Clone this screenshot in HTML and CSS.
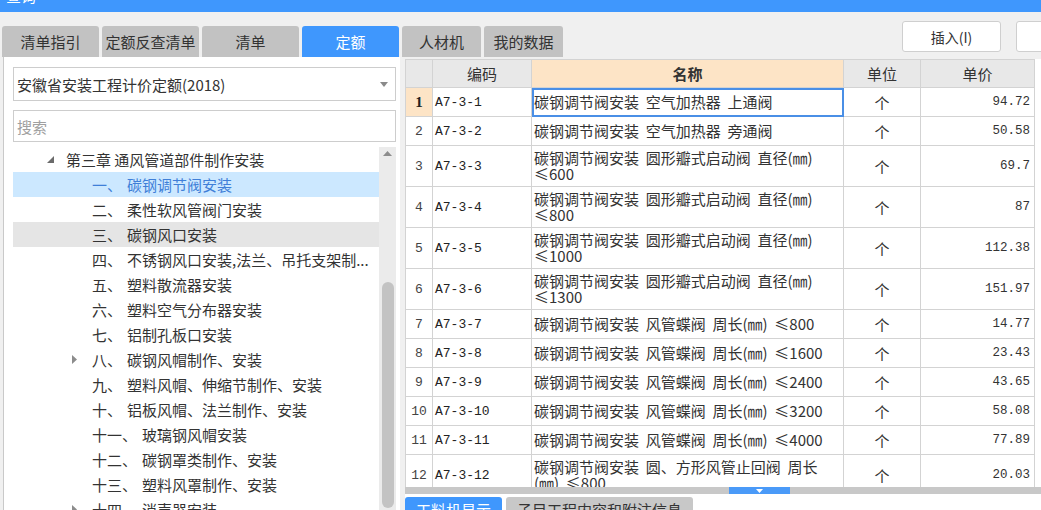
FILE: index.html
```html
<!DOCTYPE html>
<html lang="zh-CN">
<head>
<meta charset="utf-8">
<title>定额查询</title>
<link rel="stylesheet" href="styles.css">
</head>
<body>
<div class="titlebar"><div class="title">查询</div></div>
<div class="topbar">
  <div class="tabs">
    <div class="tab">清单指引</div>
    <div class="tab">定额反查清单</div>
    <div class="tab">清单</div>
    <div class="tab active">定额</div>
    <div class="tab narrow">人材机</div>
    <div class="tab narrow">我的数据</div>
  </div>
  <div class="tools">
    <div class="btn">插入(I)</div>
    <div class="btn">替换(R)</div>
  </div>
</div>
<div class="main">
  <div class="left">
    <div class="select">
      <span>安徽省安装工程计价定额(2018)</span>
      <svg class="caret" width="8" height="5" viewBox="0 0 8 5"><path d="M0 0H8L4 5Z" fill="#8a8a8a"/></svg>
    </div>
    <div class="search">搜索</div>
    <div class="tree">
      <div class="tree-list">
        <div class="node chapter"><span class="tg"><svg width="7" height="7" viewBox="0 0 7 7"><path d="M7 0V7H0Z" fill="#6b6b6b"/></svg></span>第三章 通风管道部件制作安装</div>
        <div class="node sub selected"><span class="tg"></span><span class="num">一、</span>碳钢调节阀安装</div>
        <div class="node sub"><span class="tg"></span><span class="num">二、</span>柔性软风管阀门安装</div>
        <div class="node sub hover"><span class="tg"></span><span class="num">三、</span>碳钢风口安装</div>
        <div class="node sub"><span class="tg"></span><span class="num">四、</span>不锈钢风口安装,法兰、吊托支架制...</div>
        <div class="node sub"><span class="tg"></span><span class="num">五、</span>塑料散流器安装</div>
        <div class="node sub"><span class="tg"></span><span class="num">六、</span>塑料空气分布器安装</div>
        <div class="node sub"><span class="tg"></span><span class="num">七、</span>铝制孔板口安装</div>
        <div class="node sub"><span class="tg"><svg width="5" height="9" viewBox="0 0 5 9"><path d="M0 0L5 4.5L0 9Z" fill="#8c8c8c"/></svg></span><span class="num">八、</span>碳钢风帽制作、安装</div>
        <div class="node sub"><span class="tg"></span><span class="num">九、</span>塑料风帽、伸缩节制作、安装</div>
        <div class="node sub"><span class="tg"></span><span class="num">十、</span>铝板风帽、法兰制作、安装</div>
        <div class="node sub"><span class="tg"></span><span class="num">十一、</span>玻璃钢风帽安装</div>
        <div class="node sub"><span class="tg"></span><span class="num">十二、</span>碳钢罩类制作、安装</div>
        <div class="node sub"><span class="tg"></span><span class="num">十三、</span>塑料风罩制作、安装</div>
        <div class="node sub"><span class="tg"><svg width="5" height="9" viewBox="0 0 5 9"><path d="M0 0L5 4.5L0 9Z" fill="#8c8c8c"/></svg></span><span class="num">十四、</span>消声器安装</div>
      </div>
      <div class="vscroll">
        <svg class="up" width="9" height="5" viewBox="0 0 9 5"><path d="M0 5L4.5 0L9 5Z" fill="#8c8c8c"/></svg>
        <div class="vthumb"></div>
      </div>
    </div>
  </div>
  <div class="right">
    <div class="grid-wrap">
      <table class="grid">
        <colgroup><col class="c0"><col class="c1"><col class="c2"><col class="c3"><col class="c4"></colgroup>
        <thead>
          <tr><th></th><th>编码</th><th class="hname">名称</th><th>单位</th><th>单价</th></tr>
        </thead>
        <tbody>
          <tr class="s cur"><td class="no">1</td><td class="code">A7-3-1</td><td class="name sel">碳钢调节阀安装  空气加热器  上通阀</td><td class="unit">个</td><td class="price">94.72</td></tr>
          <tr class="s"><td class="no">2</td><td class="code">A7-3-2</td><td class="name">碳钢调节阀安装  空气加热器  旁通阀</td><td class="unit">个</td><td class="price">50.58</td></tr>
          <tr class="d"><td class="no">3</td><td class="code">A7-3-3</td><td class="name">碳钢调节阀安装  圆形瓣式启动阀  直径(㎜)<br>≤600</td><td class="unit">个</td><td class="price">69.7</td></tr>
          <tr class="d"><td class="no">4</td><td class="code">A7-3-4</td><td class="name">碳钢调节阀安装  圆形瓣式启动阀  直径(㎜)<br>≤800</td><td class="unit">个</td><td class="price">87</td></tr>
          <tr class="d"><td class="no">5</td><td class="code">A7-3-5</td><td class="name">碳钢调节阀安装  圆形瓣式启动阀  直径(㎜)<br>≤1000</td><td class="unit">个</td><td class="price">112.38</td></tr>
          <tr class="d"><td class="no">6</td><td class="code">A7-3-6</td><td class="name">碳钢调节阀安装  圆形瓣式启动阀  直径(㎜)<br>≤1300</td><td class="unit">个</td><td class="price">151.97</td></tr>
          <tr class="s"><td class="no">7</td><td class="code">A7-3-7</td><td class="name">碳钢调节阀安装  风管蝶阀  周长(㎜)  ≤800</td><td class="unit">个</td><td class="price">14.77</td></tr>
          <tr class="s"><td class="no">8</td><td class="code">A7-3-8</td><td class="name">碳钢调节阀安装  风管蝶阀  周长(㎜)  ≤1600</td><td class="unit">个</td><td class="price">23.43</td></tr>
          <tr class="s"><td class="no">9</td><td class="code">A7-3-9</td><td class="name">碳钢调节阀安装  风管蝶阀  周长(㎜)  ≤2400</td><td class="unit">个</td><td class="price">43.65</td></tr>
          <tr class="s"><td class="no">10</td><td class="code">A7-3-10</td><td class="name">碳钢调节阀安装  风管蝶阀  周长(㎜)  ≤3200</td><td class="unit">个</td><td class="price">58.08</td></tr>
          <tr class="s"><td class="no">11</td><td class="code">A7-3-11</td><td class="name">碳钢调节阀安装  风管蝶阀  周长(㎜)  ≤4000</td><td class="unit">个</td><td class="price">77.89</td></tr>
          <tr class="d"><td class="no">12</td><td class="code">A7-3-12</td><td class="name">碳钢调节阀安装  圆、方形风管止回阀  周长<br>(㎜)  ≤800</td><td class="unit">个</td><td class="price">20.03</td></tr>
        </tbody>
      </table>
    </div>
    <div class="hscroll">
      <div class="hthumb"><svg width="7" height="4" viewBox="0 0 7 4"><path d="M0 0H7L3.5 4Z" fill="#fff"/></svg></div>
    </div>
    <div class="btabs">
      <div class="btab active">工料机显示</div>
      <div class="btab wide">子目工程内容和附注信息</div>
    </div>
  </div>
</div>
</body>
</html>
```
FILE: styles.css
```css
* { box-sizing: border-box; }
html, body { margin: 0; padding: 0; }
body {
  width: 1041px;
  height: 510px;
  overflow: hidden;
  background: #f0f0f0;
  font-family: "Noto Sans CJK SC", "Noto Sans", sans-serif;
  font-size: 15px;
  color: #333;
}

/* title bar */
.titlebar { height: 12px; background: #3f97fd; overflow: hidden; }
.title { color: #fff; font-size: 15px; line-height: 20px; margin-top: -14px; padding-left: 6px; }

/* top tabs + buttons */
.topbar { height: 45px; display: flex; align-items: flex-start; padding-left: 2px; }
.tabs { display: flex; gap: 3px; margin-top: 14px; flex-shrink: 0; }
.tab {
  width: 97px; height: 31px;
  background: #c2c2c2;
  border-radius: 3px 3px 0 0;
  display: flex; align-items: center; justify-content: center;
  color: #333; line-height: 1;
}
.tab.narrow { width: 79px; }
.tab.active { background: #3f97fd; color: #fff; }
.tools { display: flex; gap: 15px; margin-left: 339px; margin-top: 9px; flex-shrink: 0; }
.btn {
  width: 99px; height: 31px;
  background: #fff;
  border: 1px solid #cfcfcf;
  border-radius: 3px;
  display: flex; align-items: center; justify-content: center;
  font-size: 14px; color: #333;
  flex-shrink: 0;
}

/* main area */
.main { display: flex; height: 453px; overflow: hidden; }
.left {
  margin-left: 3px;
  width: 397px;
  background: #fff;
  border-left: 1px solid #c9c9c9;
  padding: 10px 4px 0 9px;
  display: flex; flex-direction: column;
}
.select {
  height: 34px;
  border: 1px solid #cdcdcd;
  display: flex; align-items: center; justify-content: space-between;
  padding: 0 7px 0 3px;
  color: #333;
  flex-shrink: 0;
}
.caret { margin-top: 1px; }
.search {
  margin-top: 9px;
  height: 32px;
  border: 1px solid #cdcdcd;
  display: flex; align-items: center;
  padding-left: 3px;
  color: #a0a0a0;
  flex-shrink: 0;
}
.tree { margin-top: 5px; display: flex; flex: 1; min-height: 0; overflow: hidden; }
.tree-list { flex: 1; }
.node {
  height: 25px;
  display: flex; align-items: center;
  white-space: nowrap;
  color: #333;
}
.node .tg { display: flex; align-items: center; flex-shrink: 0; }
.chapter .tg { margin-left: 34px; width: 19px; }
.sub .tg { margin-left: 59px; width: 20px; }
.num { margin-right: 5px; }
.node.selected { background: #cce8ff; color: #3f7fd8; }
.node.hover { background: #e5e5e5; }
.vscroll {
  width: 17px;
  background: #ebebeb;
  display: flex; flex-direction: column; align-items: center;
}
.vscroll .up { margin-top: 4px; flex-shrink: 0; }
.vthumb {
  margin-top: 126px;
  width: 12px; height: 226px;
  background: #c3c3c3;
  border-radius: 6px;
  flex-shrink: 0;
}

/* right area */
.right {
  margin-left: 5px;
  width: 636px;
  margin-top: 2px;
  background: #fff;
  display: flex; flex-direction: column;
  overflow: hidden;
}
.grid-wrap { height: 428px; overflow: hidden; flex-shrink: 0; }
.grid {
  width: 629px;
  border-collapse: collapse;
  table-layout: fixed;
}
.c0 { width: 27px; } .c1 { width: 99px; } .c2 { width: 312px; } .c3 { width: 77px; } .c4 { width: 114px; }
.grid th, .grid td { border: 1px solid #d3d3d3; padding: 0; }
.grid th {
  height: 28px;
  background: #e8e8e8;
  font-weight: normal;
  font-size: 15px;
  color: #333;
}
.grid th.hname { background: #fde4c6; font-weight: bold; }
.grid tr.s td { height: 29px; }
.grid tr.d td { height: 41px; }
.grid td { vertical-align: middle; }
.no { text-align: center; font-family: "Liberation Mono", monospace; font-size: 13px; color: #444; }
.cur .no { background: #fde4c6; font-family: "Liberation Serif", serif; font-weight: bold; font-size: 15px; color: #222; }
.code { padding-left: 2px !important; font-family: "Liberation Mono", monospace; font-size: 13px; color: #222; }
.name { padding-left: 2px !important; white-space: pre; line-height: 16px; font-size: 15px; color: #333; }
.name.sel { outline: 2px solid #4a8fe6; outline-offset: -2px; }
.unit { text-align: center; font-size: 15px; }
.price { text-align: right; padding-right: 4px !important; font-family: "Liberation Mono", monospace; font-size: 12.5px; color: #333; }

.hscroll {
  height: 7px;
  background: #c8c8c8;
  position: relative;
  flex-shrink: 0;
}
.hthumb {
  position: absolute; left: 324px; top: 0;
  width: 61px; height: 7px;
  background: #4a9af8;
  display: flex; justify-content: center; align-items: center;
}
.btabs { display: flex; gap: 4px; margin-top: 3px; flex-shrink: 0; }
.btab {
  width: 97px; height: 25px;
  background: #c8c8c8;
  border-radius: 3px 3px 0 0;
  display: flex; align-items: center; justify-content: center;
  color: #333;
  flex-shrink: 0;
}
.btab.active { background: #3f97fd; color: #fff; }
.btab.wide { width: 187px; }
```
